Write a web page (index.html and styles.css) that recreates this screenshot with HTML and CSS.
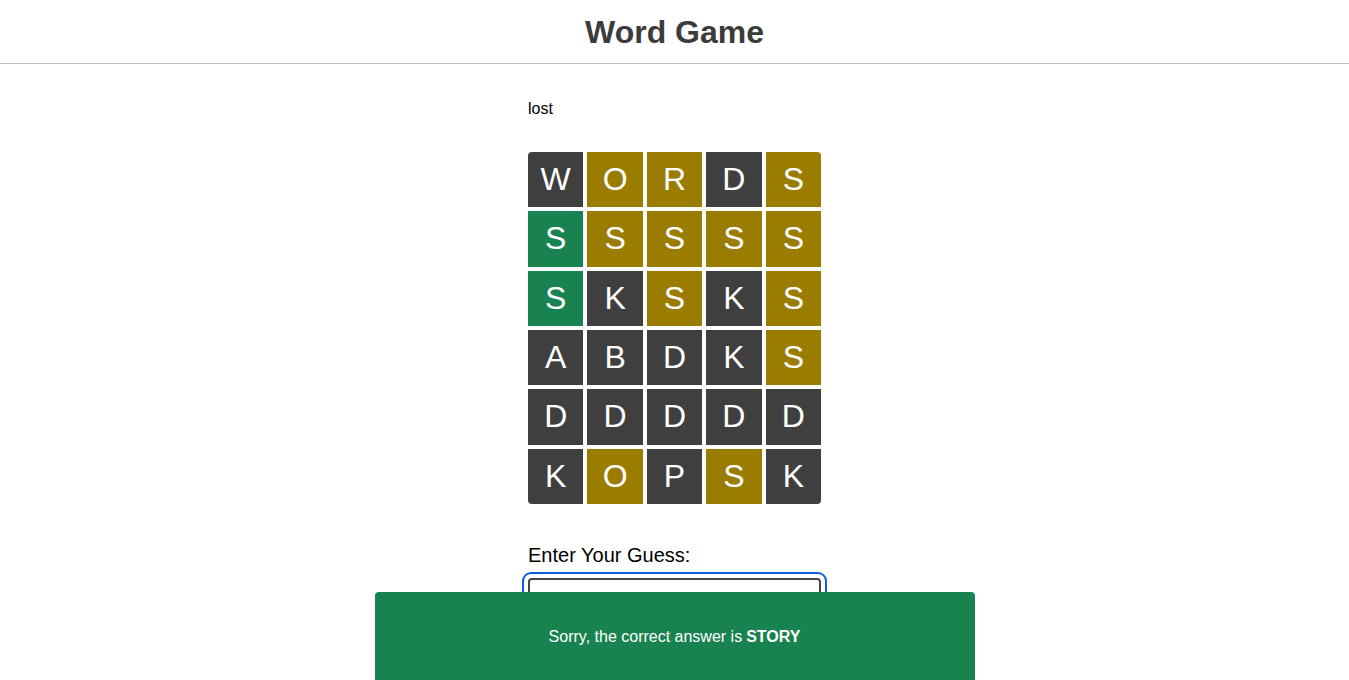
FILE: index.html
```html
<!DOCTYPE html>
<html>
<head>
<meta charset="utf-8">
<link rel="stylesheet" href="styles.css">
</head>
<body>
<header class="topbar"><h1 class="title">Word Game</h1></header>
<main class="game">
  <div class="status">lost</div>
  <div class="board">
    <div class="cell absent">W</div><div class="cell present">O</div><div class="cell present">R</div><div class="cell absent">D</div><div class="cell present">S</div>
    <div class="cell correct">S</div><div class="cell present">S</div><div class="cell present">S</div><div class="cell present">S</div><div class="cell present">S</div>
    <div class="cell correct">S</div><div class="cell absent">K</div><div class="cell present">S</div><div class="cell absent">K</div><div class="cell present">S</div>
    <div class="cell absent">A</div><div class="cell absent">B</div><div class="cell absent">D</div><div class="cell absent">K</div><div class="cell present">S</div>
    <div class="cell absent">D</div><div class="cell absent">D</div><div class="cell absent">D</div><div class="cell absent">D</div><div class="cell absent">D</div>
    <div class="cell absent">K</div><div class="cell present">O</div><div class="cell absent">P</div><div class="cell present">S</div><div class="cell absent">K</div>
  </div>
  <label class="guess-label" for="guess">Enter Your Guess:</label>
  <div class="guess-ring"><input id="guess" class="guess-input" type="text"></div>
</main>
<div class="toast">Sorry, the correct answer is <strong>STORY</strong></div>
</body>
</html>
```
FILE: styles.css
```css
html, body {
  margin: 0;
  padding: 0;
  background: #fff;
  font-family: "Liberation Sans", Arial, sans-serif;
  color: #000;
}
.topbar {
  height: 63px;
  border-bottom: 1px solid #bcbcbc;
  display: flex;
  align-items: center;
  justify-content: center;
}
.title {
  margin: 2px 0 0;
  font-size: 32px;
  font-weight: bold;
  color: #3b3b3b;
  line-height: 37px;
}
.game {
  width: 293px;
  margin: 0 auto;
  padding-top: 36px;
  display: flex;
  flex-direction: column;
}
.status {
  font-size: 16px;
  line-height: 18px;
  height: 18px;
}
.board {
  margin-top: 34px;
  display: grid;
  grid-template-columns: repeat(5, 1fr);
  grid-auto-rows: 55.33px;
  gap: 4px 4px;
  border-radius: 4px;
  overflow: hidden;
}
.cell {
  display: flex;
  align-items: center;
  justify-content: center;
  color: #fff;
  font-size: 32px;
}
.absent { background: #3f3f3f; }
.present { background: #9a7d00; }
.correct { background: #188350; }
.guess-label {
  margin-top: 40px;
  font-size: 20px;
  line-height: 23px;
}
.guess-ring {
  margin-top: 5px;
  margin-left: -6px;
  margin-right: -6px;
  padding: 4px;
  border: 2px solid #0b5fd9;
  border-radius: 9px;
}
.guess-input {
  display: block;
  box-sizing: border-box;
  width: 100%;
  height: 44px;
  border: 2px solid #444;
  border-radius: 4px;
  outline: none;
  font-size: 20px;
  font-family: inherit;
}
.toast {
  position: fixed;
  left: 50%;
  bottom: 0;
  transform: translateX(-50%);
  width: 600px;
  height: 88px;
  padding-top: 2px;
  box-sizing: border-box;
  background: #188350;
  color: #fff;
  border-radius: 4px 4px 0 0;
  display: flex;
  align-items: center;
  justify-content: center;
  font-size: 16px;
}
.toast strong { margin-left: 4px; }
```
